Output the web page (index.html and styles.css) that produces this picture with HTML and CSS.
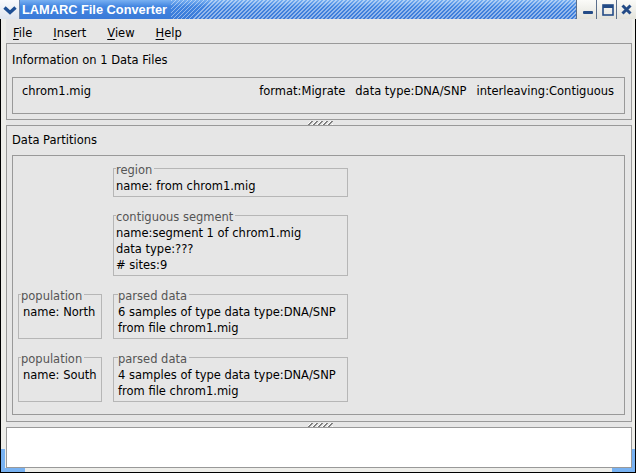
FILE: index.html
```html
<!DOCTYPE html>
<html lang="en">
<head>
    <meta charset="UTF-8">
    <title>LAMARC File Converter</title>
    <link rel="stylesheet" href="styles.css">
</head>
<body>
    <div class="window">
        <!-- Barre de titre -->
        <div class="titlebar">
            <div class="menu-icon">
                <svg width="20" height="19" viewBox="0 0 20 19"><polyline points="4.5,7.5 10,12.5 15.5,7.5" fill="none" stroke="#1e4f94" stroke-width="3.4"/></svg>
            </div>
            <div class="title">LAMARC File Converter</div>
            <div class="stripes"></div>
            <div class="wbtn">
                <svg width="19" height="19" viewBox="0 0 19 19"><rect x="6" y="11" width="10" height="3" rx="1" fill="#234b86"/></svg>
            </div>
            <div class="wbtn">
                <svg width="19" height="19" viewBox="0 0 19 19"><rect x="6" y="5" width="10" height="10" fill="none" stroke="#234b86" stroke-width="1.6"/><rect x="6" y="5" width="10" height="3" fill="#234b86"/></svg>
            </div>
            <div class="wbtn">
                <svg width="19" height="19" viewBox="0 0 19 19"><path d="M5.5 5.5 L13.5 13.5 M13.5 5.5 L5.5 13.5" stroke="#234b86" stroke-width="3"/></svg>
            </div>
        </div>

        <div class="frame">
            <div class="menubar">
                <span><u>F</u>ile</span>
                <span><u>I</u>nsert</span>
                <span><u>V</u>iew</span>
                <span><u>H</u>elp</span>
            </div>

            <!-- Fichiers -->
            <div class="pane info-pane">
                <div class="pane-title">Information on 1 Data Files</div>
                <div class="info-box">
                    <span>chrom1.mig</span>
                    <span class="info-right">
                        <span>format:Migrate</span>
                        <span>data type:DNA/SNP</span>
                        <span>interleaving:Contiguous</span>
                    </span>
                </div>
            </div>

            <div class="divider"><span class="grip"></span></div>

            <!-- Partitions -->
            <div class="pane data-pane">
                <div class="pane-title">Data Partitions</div>
                <div class="data-box">
                    <fieldset class="group wide">
                        <legend>region</legend>
                        <div>name: from chrom1.mig</div>
                    </fieldset>
                    <fieldset class="group wide">
                        <legend>contiguous segment</legend>
                        <div>name:segment 1 of chrom1.mig</div>
                        <div>data type:???</div>
                        <div># sites:9</div>
                    </fieldset>
                    <fieldset class="group pop">
                        <legend>population</legend>
                        <div>name: North</div>
                    </fieldset>
                    <fieldset class="group parsed">
                        <legend>parsed data</legend>
                        <div>6 samples of type data type:DNA/SNP</div>
                        <div>from file chrom1.mig</div>
                    </fieldset>
                    <fieldset class="group pop">
                        <legend>population</legend>
                        <div>name: South</div>
                    </fieldset>
                    <fieldset class="group parsed">
                        <legend>parsed data</legend>
                        <div>4 samples of type data type:DNA/SNP</div>
                        <div>from file chrom1.mig</div>
                    </fieldset>
                </div>
            </div>

            <div class="divider"><span class="grip"></span></div>

            <div class="pane empty-pane"></div>
        </div>
    </div>
</body>
</html>
```

FILE: styles.css
```css
body {
    margin: 0;
    background: #fff;
    font-family: "DejaVu Sans", sans-serif;
    font-size: 11.5px;
    color: #111;
}
.window {
    width: 636px;
    height: 473px;
    display: flex;
    flex-direction: column;
}
.titlebar {
    height: 19px;
    display: flex;
    background: linear-gradient(#78b0f2, #4285e0 35%, #3a7ad8);
}
.menu-icon {
    width: 20px;
    background: linear-gradient(#fafbfd, #dfe5ee);
    border-right: 1px solid #6d87ad;
    box-sizing: border-box;
}
.menu-icon svg {
    display: block;
}
.title {
    font-family: "Liberation Sans", Arial, sans-serif;
    font-weight: bold;
    font-size: 12.8px;
    color: #fff;
    line-height: 19px;
    padding: 0 4px 0 2px;
}
.stripes {
    flex: 1;
    background: repeating-linear-gradient(135deg, rgba(255,255,255,0.45) 0 1.4px, transparent 1.4px 2.83px);
}
.wbtn {
    width: 19px;
    height: 19px;
    border-left: 1px solid #5b6f8c;
    background: linear-gradient(#fbfbf8, #e3e3dc);
}
.wbtn svg {
    display: block;
}

/* cadre de la fenetre */
.frame {
    flex: 1;
    display: flex;
    flex-direction: column;
    position: relative;
    background: #eeeeea;
    border: 1px solid #000;
    border-top: none;
    padding: 0 3px 4px 5px;
}
.frame::before,
.frame::after {
    content: "";
    position: absolute;
    bottom: 0;
    width: 20px;
    height: 19px;
    border-bottom: 4px solid #78b2f2;
}
.frame::before {
    left: 0;
    border-left: 4px solid #78b2f2;
}
.frame::after {
    right: 0;
    border-right: 3px solid #78b2f2;
}
.menubar {
    height: 24px;
    box-sizing: border-box;
    padding: 7px 0 0 7px;
    display: flex;
    gap: 21px;
    line-height: 14px;
    background: #e6e6e6;
    color: #000;
}
.menubar u {
    text-decoration-thickness: 1px;
    text-underline-offset: 2px;
}
.pane {
    border: 1px solid #999;
    background: #e6e6e6;
    box-sizing: border-box;
}
.pane-title {
    line-height: 14px;
    color: #000;
}
.info-pane {
    height: 77px;
    padding: 9px 6px 0 5px;
}
.info-box {
    margin-top: 10px;
    height: 37px;
    box-sizing: border-box;
    border: 1px solid #999;
    padding: 6px 10px 0 9px;
    line-height: 14px;
    display: flex;
    justify-content: space-between;
    color: #000;
}
.info-right {
    display: flex;
    gap: 10px;
}
.divider {
    height: 5px;
    display: flex;
    justify-content: center;
    align-items: center;
    background: #e6e6e6;
}
.grip {
    width: 25px;
    height: 4px;
    margin-left: 3px;
    background: repeating-linear-gradient(135deg, transparent 0 1.6px, #fff 1.6px 2.3px, #808080 2.3px 3.54px);
}
.data-pane {
    flex: 1;
    display: flex;
    flex-direction: column;
    padding: 7px 6px 6px 5px;
}
.data-box {
    flex: 1;
    margin-top: 8px;
    border: 1px solid #999;
    padding: 3px 5px;
    display: grid;
    grid-template-columns: 84px 235px;
    column-gap: 11px;
    row-gap: 9px;
    align-content: start;
}
.group {
    margin: 0;
    min-width: 0;
    border: 1px solid #b6b6b6;
    padding: 0 2px 2px;
    color: #000;
}
.group legend {
    padding: 4px 2px 1px 0;
    line-height: 14px;
    color: #555;
}
.group div {
    line-height: 16px;
}
.wide {
    grid-column: 2;
}
.pop div {
    padding-left: 2px;
}
.parsed {
    padding-left: 4px;
}
.empty-pane {
    height: 41px;
    background: #fff;
}
```
